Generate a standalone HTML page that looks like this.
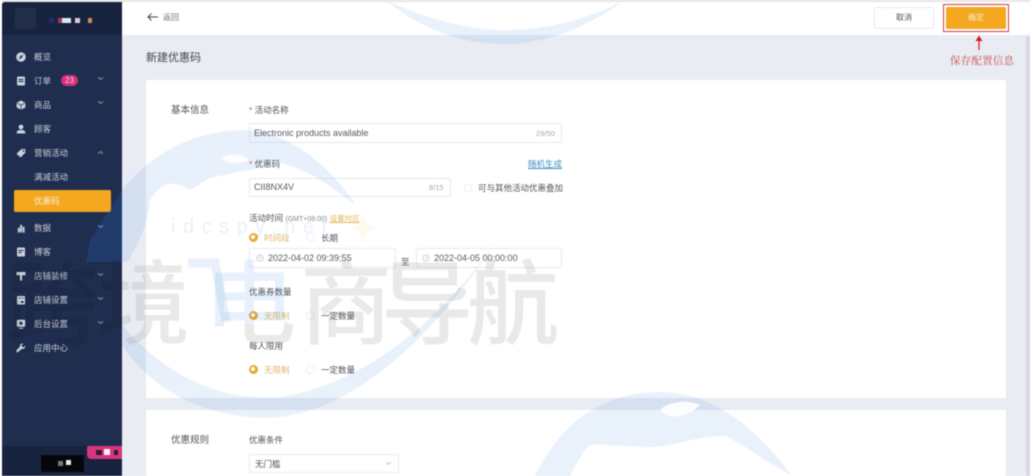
<!DOCTYPE html>
<html><head><meta charset="utf-8">
<style>
html,body{margin:0;padding:0;width:1031px;height:476px;overflow:hidden;background:#fff}
body{position:relative;font-family:"Liberation Sans","Noto Sans CJK SC",sans-serif;color:#4a4f58}
.a{position:absolute;white-space:nowrap;line-height:12px}
#root{position:absolute;left:0;top:0;width:1031px;height:476px;overflow:hidden;filter:blur(.45px)}
.box{position:absolute;box-sizing:border-box;background:#fff;border:1px solid #e8eaee;border-radius:2px}
.m{font-size:8.5px;color:#c9cfdb;left:34px}
.ic{position:absolute;left:16px;width:10px;height:10px}
.ch{position:absolute;left:97px;width:7px;height:5px}
.rad{position:absolute;left:249px;width:9px;height:9px;border-radius:50%;background:#e9a92c;box-sizing:border-box;border:2.5px solid #e9a92c}
.rad:after{content:"";position:absolute;left:0;top:0;width:4px;height:4px;border-radius:50%;background:#fff}
.off{position:absolute;width:9px;height:9px;border-radius:50%;border:1px solid #eceef1;box-sizing:border-box;background:#fff}
.l{font-size:8.5px;color:#50545c}
.o{font-size:8.5px;color:#dcb871}
</style></head>
<body>
<div id="root">
<div class="a" style="left:0;top:0;width:1031px;height:476px;background:#e9ecf3"></div>
<div class="a" style="left:0;top:0;width:1031px;height:2px;background:#e6e6e8"></div>
<div class="a" style="left:122px;top:2px;width:909px;height:33px;background:#fff"></div>
<div class="a" style="left:146px;top:80px;width:860px;height:318px;background:#fff;border-radius:2px"></div>
<div class="a" style="left:146px;top:410px;width:860px;height:66px;background:#fff;border-radius:2px"></div>
<div class="a" style="left:1026px;top:36px;width:4px;height:440px;background:#d7d9de"></div>
<div class="a" style="left:1030px;top:0;width:1px;height:476px;background:#fff"></div>

<div class="a" style="left:0;top:0;width:2px;height:476px;background:#fff"></div>
<div class="a" style="left:2px;top:2px;width:120px;height:474px;background:#1f2d4e;border-radius:3px 0 0 0"></div>
<div class="a" style="left:2px;top:2px;width:120px;height:33px;background:#18233f;border-radius:3px 0 0 0"></div>
<div class="a" style="left:2px;top:446px;width:120px;height:30px;background:#18233f"></div>
<div class="a" style="left:15px;top:8px;width:21px;height:21px;background:#222e4c;border-radius:3px"></div>
<div class="a" style="left:49px;top:18px;width:5px;height:5px;background:#232a74"></div>
<div class="a" style="left:58px;top:18px;width:4px;height:5px;background:#a5345f"></div>
<div class="a" style="left:62px;top:18px;width:9px;height:5px;background:#d4ecf2"></div>
<div class="a" style="left:75px;top:18px;width:5px;height:5px;background:#dfc9dd"></div>
<div class="a" style="left:88px;top:18px;width:4px;height:5px;background:#c78e4c"></div>

<svg class="ic" style="top:52px" viewBox="0 0 10 10"><circle cx="5" cy="5" r="4.8" fill="#c9cfdb"/><path d="M7.2 2.8 5.8 5.8 2.8 7.2 4.2 4.2Z" fill="#1f2d4e"/></svg>
<div class="a m" style="top:51px">概览</div>
<svg class="ic" style="top:76px" viewBox="0 0 10 10"><rect x="1" y=".5" width="8" height="9" rx="1" fill="#c9cfdb"/><path d="M2.5 3.5h5M2.5 5.5h5" stroke="#1f2d4e"/></svg>
<div class="a m" style="top:75px">订单</div>
<div class="a" style="left:61px;top:75px;width:17px;height:11px;border-radius:6px;background:#d3307b;color:#f5d8e5;font-size:8px;line-height:11px;text-align:center">23</div>
<svg class="ic" style="top:100px" viewBox="0 0 10 10"><path d="M5 .4 9.4 2.8V7.4L5 9.8.6 7.4V2.8Z" fill="#c9cfdb"/><path d="M1 3l4 2.2L9 3M5 5.2V9.6" stroke="#1f2d4e" stroke-width=".7" fill="none"/></svg>
<div class="a m" style="top:99px">商品</div>
<svg class="ic" style="top:124px" viewBox="0 0 10 10"><circle cx="5" cy="3" r="2.4" fill="#c9cfdb"/><path d="M.8 9.5V8C.8 6.600 3 6 5 6s4.200.6 4.200 2v1.500Z" fill="#c9cfdb"/></svg>
<div class="a m" style="top:123px">顾客</div>
<svg class="ic" style="top:148px" viewBox="0 0 10 10"><path d="M5.500 1H9.300V4.800L4.600 9.500.5 5.800Z" fill="#c9cfdb"/><circle cx="7.500" cy="2.800" r=".9" fill="#1f2d4e"/></svg>
<div class="a m" style="top:147px">营销活动</div>
<div class="a m" style="top:171px">满减活动</div>
<div class="a" style="left:14px;top:190px;width:97px;height:22px;background:#f3a81f;border-radius:2px"></div>
<div class="a m" style="top:195px;color:#fdf0d6">优惠码</div>
<svg class="ic" style="top:223px" viewBox="0 0 10 10"><path d="M1 9.500h8.500M2 5h1.600v3.800H2ZM4.300 2h1.600v6.800H4.300ZM6.800 4h1.600v4.800H6.800Z" fill="#c9cfdb" stroke="#c9cfdb" stroke-width=".4"/></svg>
<div class="a m" style="top:222px">数据</div>
<svg class="ic" style="top:247px" viewBox="0 0 10 10"><rect x="1" y=".5" width="8" height="9" rx="1" fill="#c9cfdb"/><path d="M2.500 3.500h5M2.500 5.500h3" stroke="#1f2d4e"/></svg>
<div class="a m" style="top:246px">博客</div>
<svg class="ic" style="top:271px" viewBox="0 0 10 10"><path d="M.5 1H9.500V4.200H6V9.500H4V4.200H.5Z" fill="#c9cfdb"/></svg>
<div class="a m" style="top:270px">店铺装修</div>
<svg class="ic" style="top:295px" viewBox="0 0 10 10"><rect x="1" y="1" width="8" height="8.500" rx="1" fill="#c9cfdb"/><path d="M2 2.800h6V3.400H2Z" fill="#1f2d4e"/><rect x="5" y="6" width="2.500" height="2" fill="#1f2d4e"/></svg>
<div class="a m" style="top:294px">店铺设置</div>
<svg class="ic" style="top:319px" viewBox="0 0 10 10"><rect x=".8" y=".8" width="8.400" height="7" rx="1" fill="#c9cfdb"/><circle cx="5" cy="4.200" r="1.600" fill="#1f2d4e"/><path d="M3 9.300h4" stroke="#c9cfdb"/></svg>
<div class="a m" style="top:318px">后台设置</div>
<svg class="ic" style="top:343px" viewBox="0 0 10 10"><path d="M9.300 2.600 7.500 4.200 6 3.800 5.600 2.400 7.300.7C5.500.1 3.800 1.400 4 3.500L.6 7.200C0 8 .5 9.300 1.800 9.400L5.700 5.900C7.800 6.300 9.600 4.700 9.300 2.600Z" fill="#c9cfdb"/></svg>
<div class="a m" style="top:342px">应用中心</div>

<svg class="ch" style="top:76px" viewBox="0 0 7 5"><path d="M1 1.200 3.500 3.500 6 1.200" fill="none" stroke="#8c95aa"/></svg>
<svg class="ch" style="top:100px" viewBox="0 0 7 5"><path d="M1 1.200 3.500 3.500 6 1.200" fill="none" stroke="#8c95aa"/></svg>
<svg class="ch" style="top:150px" viewBox="0 0 7 5"><path d="M1 3.800 3.500 1.500 6 3.800" fill="none" stroke="#8c95aa"/></svg>
<svg class="ch" style="top:224px" viewBox="0 0 7 5"><path d="M1 1.200 3.500 3.500 6 1.200" fill="none" stroke="#8c95aa"/></svg>
<svg class="ch" style="top:272px" viewBox="0 0 7 5"><path d="M1 1.200 3.500 3.500 6 1.200" fill="none" stroke="#8c95aa"/></svg>
<svg class="ch" style="top:296px" viewBox="0 0 7 5"><path d="M1 1.200 3.500 3.500 6 1.200" fill="none" stroke="#8c95aa"/></svg>
<svg class="ch" style="top:320px" viewBox="0 0 7 5"><path d="M1 1.200 3.500 3.500 6 1.200" fill="none" stroke="#8c95aa"/></svg>

<div class="a" style="left:87px;top:446px;width:35px;height:13px;background:#d9357f;border-radius:2px 0 0 4px"></div>
<div class="a" style="left:96px;top:450px;width:6px;height:5px;background:#2a1c30"></div>
<div class="a" style="left:104px;top:449px;width:6px;height:6px;background:#fbeef4"></div>
<div class="a" style="left:114px;top:450px;width:4px;height:5px;background:#2a1c30"></div>
<div class="a" style="left:41px;top:455px;width:43px;height:17px;background:#06070c"></div>
<div class="a" style="left:58px;top:461px;width:5px;height:5px;background:#77787c"></div>
<div class="a" style="left:66px;top:460px;width:5px;height:5px;background:#e8e8e8"></div>

<svg class="a" style="left:147px;top:12px;width:12px;height:10px" viewBox="0 0 12 10"><path d="M11 5H1M4.500 1.500 1 5l3.500 3.500" fill="none" stroke="#44484f"/></svg>
<div class="a" style="left:163px;top:12px;font-size:8px;color:#6b6f76">返回</div>
<div class="a" style="left:146px;top:51px;font-size:11px;line-height:14px;color:#43474f">新建优惠码</div>

<div class="box" style="left:874px;top:7px;width:60px;height:22px;text-align:center;font-size:8px;line-height:20px;color:#50545c">取消</div>
<div class="a" style="left:946px;top:7px;width:60px;height:22px;background:#f3a81f;border-radius:2px;text-align:center;font-size:8px;line-height:22px;color:#fbe9c6">确定</div>
<div class="a" style="left:943px;top:4px;width:66px;height:28px;box-sizing:border-box;border:1.500px solid #cf3d43"></div>
<svg class="a" style="left:974px;top:35px;width:10px;height:16px" viewBox="0 0 10 16"><path d="M5 15V4" stroke="#d21b22" stroke-width="1.200"/><path d="M1.500 6 5 .5 8.500 6Z" fill="#d21b22"/></svg>
<div class="a" style="left:950px;top:55px;font-size:10.500px;line-height:13px;letter-spacing:.2px;color:#c9504f;font-family:'Liberation Serif','Noto Serif CJK SC',serif">保存配置信息</div>

<div class="a" style="left:171px;top:105px;font-size:9.500px;color:#50545c">基本信息</div>
<div class="a" style="left:249px;top:104px;font-size:8.500px;color:#50545c"><span style="color:#d9534f">*</span> 活动名称</div>
<div class="box" style="left:249px;top:123px;width:313px;height:20px"></div>
<div class="a" style="left:254px;top:127px;font-size:9px;color:#555960">Electronic products available</div>
<div class="a" style="left:536px;top:128px;font-size:7.500px;color:#a5a8ad">29/50</div>

<div class="a" style="left:249px;top:158px;font-size:8.500px;color:#50545c"><span style="color:#d9534f">*</span> 优惠码</div>
<div class="a" style="left:528px;top:158px;font-size:8.500px;color:#3f8ec4;text-decoration:underline">随机生成</div>
<div class="box" style="left:249px;top:178px;width:202px;height:19px"></div>
<div class="a" style="left:254px;top:181px;font-size:9px;color:#555960">CII8NX4V</div>
<div class="a" style="left:429px;top:182px;font-size:7.500px;color:#a5a8ad">8/15</div>
<div class="box" style="left:464px;top:184px;width:8px;height:8px;border-color:#eceef1"></div>
<div class="a" style="left:478px;top:182px;font-size:8.500px;color:#50545c">可与其他活动优惠叠加</div>

<div class="a" style="left:249px;top:212px;font-size:8.500px;color:#50545c">活动时间 <span style="font-size:7px;color:#85888e">(GMT+08:00)</span> <span style="color:#e3b65c;text-decoration:underline;font-size:7.500px">设置时区</span></div>
<div class="rad" style="top:233px"></div>
<div class="a o" style="left:264px;top:232px">时间段</div>
<div class="off" style="left:306px;top:233px"></div>
<div class="a l" style="left:321px;top:232px">长期</div>

<div class="box" style="left:249px;top:248px;width:147px;height:20px"></div>
<svg class="a" style="left:256px;top:254px;width:8px;height:8px" viewBox="0 0 8 8"><circle cx="4" cy="4" r="3.200" fill="none" stroke="#b9bcc1" stroke-width=".7"/><path d="M4 2v2.200h1.500" fill="none" stroke="#b9bcc1" stroke-width=".6"/></svg>
<div class="a" style="left:268px;top:252px;font-size:9px;color:#555960">2022-04-02 09:39:55</div>
<div class="a l" style="left:401px;top:256px">至</div>
<div class="box" style="left:416px;top:248px;width:146px;height:20px"></div>
<svg class="a" style="left:422px;top:254px;width:8px;height:8px" viewBox="0 0 8 8"><circle cx="4" cy="4" r="3.200" fill="none" stroke="#b9bcc1" stroke-width=".7"/><path d="M4 2v2.200h1.500" fill="none" stroke="#b9bcc1" stroke-width=".6"/></svg>
<div class="a" style="left:434px;top:252px;font-size:9px;color:#555960">2022-04-05 00:00:00</div>

<div class="a l" style="left:249px;top:286px">优惠券数量</div>
<div class="rad" style="top:311px"></div>
<div class="a o" style="left:264px;top:310px">无限制</div>
<div class="off" style="left:306px;top:311px"></div>
<div class="a l" style="left:321px;top:310px">一定数量</div>
<div class="a l" style="left:249px;top:340px">每人限用</div>
<div class="rad" style="top:365px"></div>
<div class="a o" style="left:264px;top:364px">无限制</div>
<div class="off" style="left:306px;top:365px"></div>
<div class="a l" style="left:321px;top:364px">一定数量</div>

<div class="a" style="left:171px;top:435px;font-size:9.500px;color:#50545c">优惠规则</div>
<div class="a l" style="left:249px;top:434px">优惠条件</div>
<div class="box" style="left:249px;top:454px;width:150px;height:19px"></div>
<div class="a l" style="left:255px;top:458px">无门槛</div>
<svg class="a" style="left:385px;top:461px;width:7px;height:5px" viewBox="0 0 7 5"><path d="M1 1 3.500 3.500 6 1" fill="none" stroke="#c4c6cb"/></svg>

<svg class="a" style="left:0;top:0;pointer-events:none" width="1031" height="476" viewBox="0 0 1031 476">
<defs>
<clipPath id="right"><rect x="122" y="0" width="909" height="476"/></clipPath>
<clipPath id="left"><rect x="0" y="0" width="122" height="476"/></clipPath>
<clipPath id="eTop"><rect x="190" y="240" width="110" height="84"/></clipPath>
<clipPath id="eBot"><rect x="190" y="324" width="110" height="40"/></clipPath>
</defs>
<g fill="#2b7fdc" opacity=".1">
<path d="M122 190C150 155 190 132 240 130C285 130 325 160 356 205C335 190 320 178 305 172C290 165 275 158 265 165C250 172 240 170 225 175C205 178 205 182 190 190C170 178 160 185 150 200C148 225 140 240 128 262L122 262Z"/>
<path d="M122 345C155 395 210 417 265 418C345 417 430 345 500 235C440 325 360 385 280 397C220 402 165 375 122 325Z"/>
<path d="M385 0C425 32 465 44 505 44C550 44 590 25 625 0C590 18 550 30 505 30C465 30 425 18 385 0Z"/>
<path d="M535 476C560 425 600 392 660 392C710 392 755 425 792 476L765 460C750 450 735 440 725 436C695 436 680 445 655 447C625 447 605 444 590 445C580 455 575 466 570 476Z"/>
<path fill="none" stroke="#2b7fdc" stroke-width="9" d="M188 263H215L226 322"/>
</g>
<path d="M90 240 122 190V262H86Z" fill="#2b6fd0" opacity=".22"/>
<path d="M222 158C232 152 245 155 249 160C240 164 228 165 222 158ZM660 410C670 400 690 400 700 405C690 415 672 422 660 410Z" fill="#fff" opacity=".9"/>
<path d="M363 213 367 224 377 228 367 232 363 243 359 232 349 228 359 224Z" fill="#f5c25a" opacity=".1"/>
<text x="171" y="233" font-family="Liberation Sans,sans-serif" font-size="20" letter-spacing="7.500" fill="#2b7fdc" opacity=".1">idcspy.net</text>
<g font-family="'Noto Sans CJK SC',sans-serif" font-size="92" font-weight="500">
<text clip-path="url(#right)" y="337" fill="#8c8c8c" opacity=".18"><tspan x="98">境</tspan><tspan x="300">商</tspan><tspan x="381">导</tspan><tspan x="467">航</tspan></text>
<text clip-path="url(#left)" y="337" fill="#000" opacity=".07"><tspan x="6">跨</tspan><tspan x="98">境</tspan></text>
<text clip-path="url(#eTop)" x="204" y="337" fill="#2b7fdc" opacity=".1">电</text>
<text clip-path="url(#eBot)" x="204" y="337" fill="#8c8c8c" opacity=".18">电</text>
</g>
</svg>
</div>
</body></html>
